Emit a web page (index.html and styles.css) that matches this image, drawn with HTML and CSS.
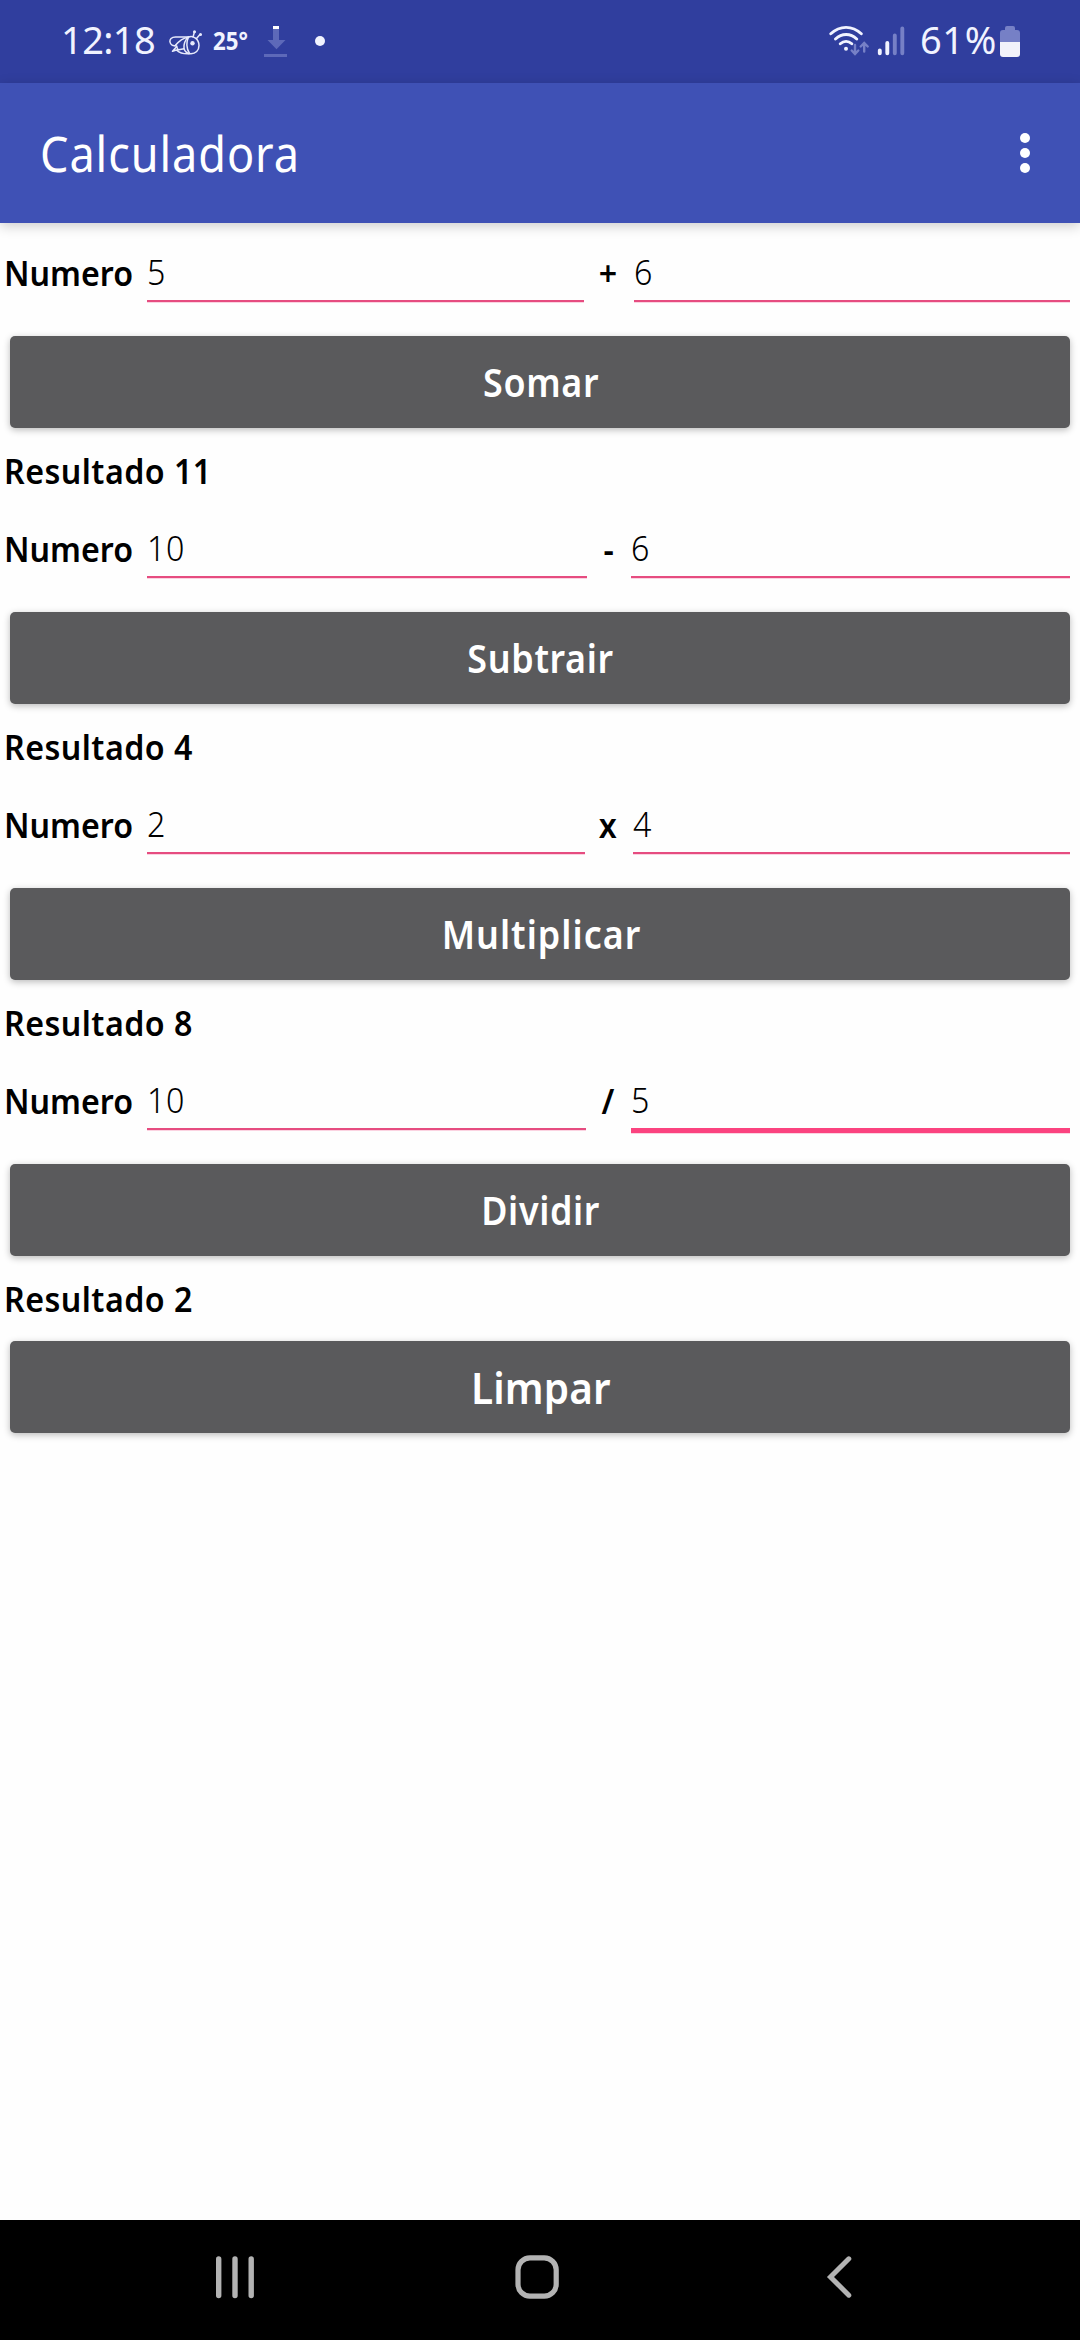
FILE: index.html
```html
<!DOCTYPE html>
<html lang="pt">
<head>
<meta charset="utf-8">
<title>Calculadora</title>
<link rel="stylesheet" href="styles.css">
</head>
<body>
<div class="status">
  <div class="clock"><span class="fit">12:18</span></div>
  <svg class="bee" width="34" height="28" viewBox="169 29 34 28" fill="none" stroke="#e6e9fb" stroke-width="1.500" stroke-linecap="round" stroke-linejoin="round">
    <path d="M188.500 37C193 35 199 39 199 45.500c0 5-3.500 8.300-8 8.300-3.500 0-6-2-7-5"/>
    <path d="M188.500 37H175.500c-4 0-6 2.500-5.500 5 .5 3 3 4.300 6 3.500"/>
    <path d="M188.500 37c-5 1-10 4.500-13.500 8.800M188.500 37c-3.500 3-5 7.500-4.500 11.800l-6.500 1.200"/>
    <path d="M176.500 46.500l1.500 3-5.500 1.700 4.500-5M177 50.500c2.500 2.500 7 3.500 12 3.300M188.500 37c-2.500 5.500-2 11.500 1 16.500"/>
    <path d="M193 37l1.300-4.500M196.500 38.500l3-3.500"/>
    <circle cx="194.500" cy="31.700" r=".8"/><circle cx="200.500" cy="34.500" r=".8"/>
    <circle cx="192.500" cy="43.200" r="2.200" fill="#e6e9fb" stroke="none"/>
  </svg>
  <div class="temp"><span class="fit">25°</span></div>
  <svg class="download" width="24" height="32" viewBox="264 26 24 32">
    <path d="M273 26h6v14h6.500l-9 9.300-9-9.300h5.500zM264 54h23v3h-23z" fill="#5d69b9"/>
    <path d="M273 26h6v3h-6z" fill="#fff"/>
  </svg>
  <div class="more-dot"></div>
  <svg class="signal" width="77" height="32" viewBox="829 25 77 32" fill="none" stroke-linecap="round">
    <g stroke="#f1f3ff" stroke-width="2.900">
      <path d="M830.800 33.800c9-8.600 21.500-8.600 30.500 0M835.500 39c6.300-6 15-6 21.200 0M840.300 43.800c3.500-3.200 8-3.200 11.500 0"/>
      <circle cx="846" cy="48.800" r="2" fill="#f1f3ff" stroke="none"/>
    </g>
    <path d="M855 45v8.500M851.700 50.500l3.300 3.500 3.300-3.500M864.200 51.500V43.500M860.700 46.500l3.500-3.500 3.500 3.500" stroke="#7680c6" stroke-width="2.400"/>
    <g stroke-width="3.900">
      <path d="M879.800 50.500v2.700M887.300 43v10.200" stroke="#f1f3ff"/>
      <path d="M894.800 35.500v17.700M902.300 28.500v24.700" stroke="#7680c6"/>
    </g>
  </svg>
  <div class="percent"><span class="fit">61%</span></div>
  <svg class="battery" width="20" height="31" viewBox="1000 26 20 31">
    <path d="M1000 42v-9q0-3 3-3h2v-2q0-2 2-2h6q2 0 2 2v2h2q3 0 3 3v9z" fill="#7680c6"/>
    <path d="M1000 42h20v12q0 3-3 3h-14q-3 0-3-3z" fill="#f1f2fa"/>
  </svg>
</div>
<header class="toolbar">
  <h1 class="title"><span class="fit">Calculadora</span></h1>
  <div class="menu"><i></i><i></i><i></i></div>
</header>
<main class="content">
  <section class="operation">
    <div class="row"><label class="label"><span class="fit">Numero</span></label><div class="field"><span class="fit">5</span></div><div class="op plus"><span class="fit">+</span></div><div class="field"><span class="fit">6</span></div></div>
    <button class="button"><span class="fit">Somar</span></button>
    <p class="result"><span class="fit">Resultado 11</span></p>
  </section>
  <section class="operation">
    <div class="row"><label class="label"><span class="fit">Numero</span></label><div class="field"><span class="fit">10</span></div><div class="op minus"><span class="fit">-</span></div><div class="field"><span class="fit">6</span></div></div>
    <button class="button"><span class="fit">Subtrair</span></button>
    <p class="result"><span class="fit">Resultado 4</span></p>
  </section>
  <section class="operation">
    <div class="row"><label class="label"><span class="fit">Numero</span></label><div class="field"><span class="fit">2</span></div><div class="op times"><span class="fit">x</span></div><div class="field"><span class="fit">4</span></div></div>
    <button class="button wide"><span class="fit">Multiplicar</span></button>
    <p class="result"><span class="fit">Resultado 8</span></p>
  </section>
  <section class="operation">
    <div class="row"><label class="label"><span class="fit">Numero</span></label><div class="field"><span class="fit">10</span></div><div class="op divide"><span class="fit">/</span></div><div class="field focused"><span class="fit">5</span></div></div>
    <button class="button"><span class="fit">Dividir</span></button>
    <p class="result"><span class="fit">Resultado 2</span></p>
  </section>
  <button class="button clear"><span class="fit">Limpar</span></button>
</main>
<nav class="navbar">
  <svg width="38" height="44" viewBox="216 2255 38 44" stroke="#b3b3b3" stroke-width="5.400" stroke-linecap="round"><path d="M218.700 2259v36.500M235 2259v36.500M251.200 2259v36.500"/></svg>
  <svg class="home" width="44" height="44" viewBox="515 2255 44 44" fill="none" stroke="#b3b3b3" stroke-width="5.200"><rect x="518" y="2257.800" width="38.200" height="38.400" rx="12"/></svg>
  <svg class="back" width="26" height="44" viewBox="826 2255 26 44" fill="none" stroke="#b3b3b3" stroke-width="5" stroke-linecap="round"><path d="M848.800 2258.800L830.500 2277l18.300 18.200"/></svg>
</nav>
</body>
</html>
```
FILE: styles.css
```css
* { box-sizing: border-box; }

body {
  margin: 0;
  width: 1080px;
  height: 2340px;
  display: flex;
  flex-direction: column;
  background: #fefefe;
  color: #000;
  font-family: "Noto Sans", sans-serif;
  font-size: 35px;
  overflow: hidden;
}

/* Slightly narrowed letterforms with open tracking */
.fit {
  display: inline-block;
  transform: scaleX(.92);
  transform-origin: left center;
  letter-spacing: .7px;
  white-space: pre;
}

.status {
  flex: none;
  height: 83px;
  display: flex;
  align-items: flex-start;
  padding-left: 61px;
  background: #303e9e;
  color: #f1f3ff;
  line-height: 78px;
}

.clock { width: 108px; font-size: 38px; }
.clock .fit { transform: none; letter-spacing: -.6px; }
.bee { margin-top: 29px; }
.temp { width: 51px; margin-left: 10px; font-size: 25px; font-weight: 700; line-height: 81px; }
.temp .fit { transform: scaleX(.89); letter-spacing: 0; }
.download { margin-top: 26px; }
.more-dot { width: 10px; height: 10px; margin: 36px 0 0 27px; border-radius: 50%; background: #f1f3ff; }
.signal { margin: 25px 0 0 504px; }
.percent { width: 80px; margin-left: 14px; font-size: 38px; }
.percent .fit { transform: none; letter-spacing: .6px; }
.battery { margin-top: 26px; }

.toolbar {
  position: relative;
  flex: none;
  height: 140px;
  display: flex;
  justify-content: space-between;
  align-items: center;
  padding: 0 50px 0 39px;
  background: #3f51b5;
  color: #fff;
  box-shadow: 0 3px 12px rgba(0, 0, 0, .2);
}

.title { margin: 0; padding-left: 1px; font-size: 49px; font-weight: 400; line-height: 140px; }
.title .fit { letter-spacing: 1px; }
.menu { display: flex; flex-direction: column; gap: 5px; }
.menu i { width: 10px; height: 10px; border-radius: 50%; background: #fff; }

.content { flex: 1; padding: 7px 10px 0 0; }
.operation { height: 276px; }
.row { display: flex; height: 72px; line-height: 60px; }
.label { width: 147px; padding: 13px 0 0 4px; font-weight: 600; }
.label .fit { letter-spacing: 0; }

.field {
  flex: 1;
  height: 72px;
  padding-top: 12px;
  border-bottom: 2px solid #e64c80;
  box-shadow: 0 1px #fbd3e1;
  font-weight: 350;
}

.focused { height: 75px; border-bottom: 5px solid #fb437f; }

.op { display: flex; justify-content: center; padding-top: 13px; font-weight: 600; }
.op .fit { transform-origin: center; }
.plus { width: 50px; }
.minus { width: 44px; }
.times { width: 48px; }
.divide { width: 45px; }

.button {
  display: block;
  width: 1060px;
  height: 92px;
  margin: 34px 0 0 10px;
  padding: 0;
  border: 0;
  border-radius: 5px;
  background: #5a5a5c;
  color: #fff;
  font: 600 39px/92px "Noto Sans", sans-serif;
  text-align: center;
  box-shadow: 0 2px 7px rgba(0, 0, 0, .27);
}

.button .fit { transform-origin: center; margin-left: 2px; }
.wide .fit { letter-spacing: 1.1px; }
.clear { margin-top: 7px; font-size: 44px; line-height: 92px; }
.clear .fit { letter-spacing: .1px; }

.result { height: 78px; margin: 0; padding-left: 4px; font-weight: 600; line-height: 86px; }
.result .fit { letter-spacing: .5px; }

.navbar {
  flex: none;
  height: 120px;
  display: flex;
  align-items: flex-start;
  padding: 35px 0 0 216px;
  background: #000;
}

.home { margin-left: 261px; }
.back { margin-left: 267px; }
```
